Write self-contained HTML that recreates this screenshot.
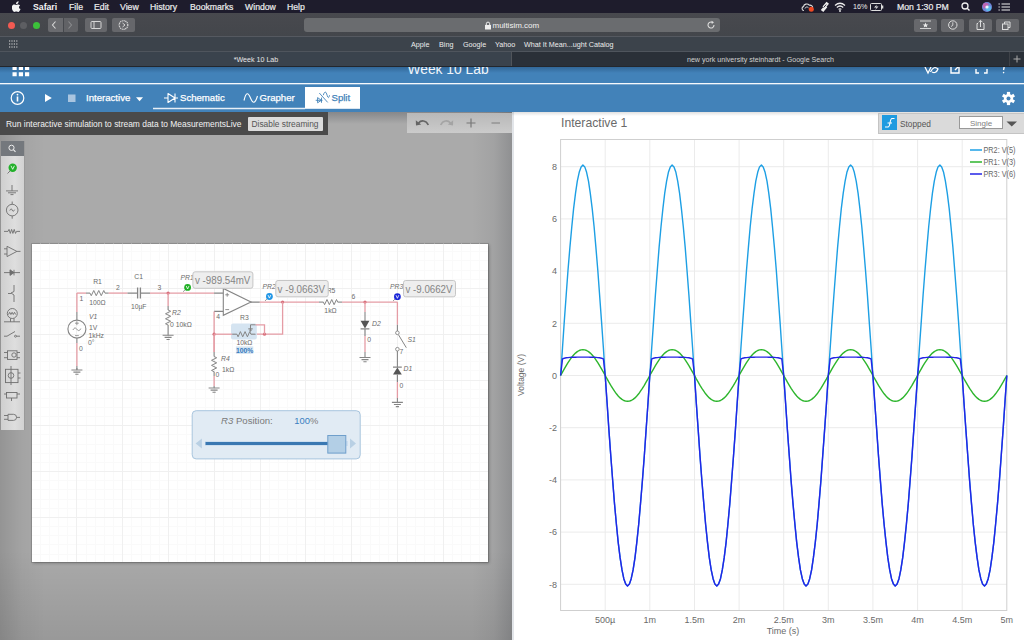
<!DOCTYPE html>
<html><head><meta charset="utf-8">
<style>
*{box-sizing:border-box;margin:0;padding:0}
html,body{width:1024px;height:640px;overflow:hidden;background:#a6a6a6;font-family:"Liberation Sans",sans-serif}
.a{position:absolute}
.t{position:absolute;white-space:nowrap;line-height:1}
svg text{font-family:"Liberation Sans",sans-serif}
</style></head><body>
<!-- menu bar -->
<div class="a" style="left:0;top:0;width:1024px;height:13px;background:#1e1c2c"></div>
<!-- toolbar -->
<div class="a" style="left:0;top:13px;width:1024px;height:24px;background:linear-gradient(#48494e,#43464b)"></div>
<div class="a" style="left:0;top:36px;width:1024px;height:1px;background:#555960"></div>
<!-- bookmarks bar -->
<div class="a" style="left:0;top:37px;width:1024px;height:14px;background:#3c434b"></div>
<div class="a" style="left:0;top:51px;width:1024px;height:1px;background:#4f555d"></div>
<!-- tab bar -->
<div class="a" style="left:0;top:52px;width:512px;height:14px;background:#3a434d"></div>
<div class="a" style="left:512px;top:52px;width:512px;height:14px;background:#2a3038"></div>
<div class="a" style="left:511px;top:52px;width:1px;height:14px;background:#50545a"></div>
<div class="a" style="left:0;top:66px;width:1024px;height:1px;background:#23272d;z-index:2"></div>
<div class="a" style="left:1009px;top:52px;width:1px;height:14px;background:#3e4248"></div>
<!-- menu bar content -->
<svg class="a" style="left:12px;top:1px" width="10" height="11" viewBox="0 0 10 11"><path d="M6.6,0.3C6.7,1.1 6.3,1.9 5.8,2.4C5.3,2.9 4.6,3.2 4,3.1C3.9,2.4 4.3,1.6 4.8,1.1C5.3,0.6 6.1,0.3 6.6,0.3ZM8.6,8.1C8.3,8.8 8.1,9.1 7.7,9.7C7.2,10.4 6.6,11 5.9,11C5.2,11 5.1,10.6 4.2,10.6C3.3,10.6 3.1,11 2.4,11C1.8,11 1.2,10.4 0.8,9.8C-0.4,8 -0.5,5.9 0.2,4.8C0.7,4 1.5,3.5 2.3,3.5C3.1,3.5 3.6,3.9 4.3,3.9C4.9,3.9 5.3,3.5 6.2,3.5C6.9,3.5 7.6,3.9 8.1,4.5C6.4,5.5 6.7,7.9 8.6,8.1Z" fill="#f4f4f4"/></svg>
<div class="t" style="left:33px;top:2.9px;font-size:8.7px;font-weight:bold;color:#f4f4f4">Safari</div>
<div class="t" style="left:69px;top:2.9px;font-size:8.7px;color:#ececec;-webkit-text-stroke:0.2px #ececec">File</div>
<div class="t" style="left:94px;top:2.9px;font-size:8.7px;color:#ececec;-webkit-text-stroke:0.2px #ececec">Edit</div>
<div class="t" style="left:120px;top:2.9px;font-size:8.7px;color:#ececec;-webkit-text-stroke:0.2px #ececec">View</div>
<div class="t" style="left:150px;top:2.9px;font-size:8.7px;color:#ececec;-webkit-text-stroke:0.2px #ececec">History</div>
<div class="t" style="left:190px;top:2.9px;font-size:8.7px;color:#ececec;-webkit-text-stroke:0.2px #ececec">Bookmarks</div>
<div class="t" style="left:245px;top:2.9px;font-size:8.7px;color:#ececec;-webkit-text-stroke:0.2px #ececec">Window</div>
<div class="t" style="left:287px;top:2.9px;font-size:8.7px;color:#ececec;-webkit-text-stroke:0.2px #ececec">Help</div>
<!-- menu right -->
<svg class="a" style="left:800px;top:1px" width="224" height="12" viewBox="800 1 224 12">
 <path d="M804,10.5C801.5,10.5 801.5,7 803.5,6.6C803.8,4 807.5,3 809.2,5.2C811.5,4.8 813,6.5 812.6,8" stroke="#ddd" stroke-width="1.1" fill="none"/><path d="M805,8.5C805.5,6.8 807.5,6.5 808.5,7.8" stroke="#ddd" stroke-width="1" fill="none"/><circle cx="811.3" cy="9.3" r="2.5" fill="#f04a23"/>
 <path d="M822.5,6.5L826.5,1.8L829,3.8L825,8.5ZM820.8,10L824.8,5.3L827.3,7.3L823.3,12Z" fill="#eee"/><path d="M823.6,7.6L826.2,4.6" stroke="#1e1c2c" stroke-width="0.9"/>
 <path d="M835,5.5 Q840,1 845,5.5 M836.8,7.5 Q840,4.5 843.2,7.5 M838.6,9.4 Q840,8.2 841.4,9.4" stroke="#eee" stroke-width="1.2" fill="none"/><circle cx="840" cy="11" r="0.9" fill="#eee"/>
 <rect x="870.5" y="3.5" width="11" height="7" rx="1" fill="none" stroke="#ddd" stroke-width="1"/><rect x="882" y="5.5" width="1.3" height="3" fill="#ddd"/><path d="M877,4.5 L874,7.5 L876.5,7.5 L875,10 L878.5,6.5 L876,6.5Z" fill="#eee"/>
 <circle cx="965" cy="6" r="3" fill="none" stroke="#eee" stroke-width="1.3"/><path d="M967.2,8.2 L969.5,10.5" stroke="#eee" stroke-width="1.4"/>
 <circle cx="987" cy="7" r="5" fill="#6f86d8"/><circle cx="985.8" cy="5.8" r="3" fill="#d75aa8" opacity="0.75"/><circle cx="988.3" cy="8.2" r="2.8" fill="#56c8f0" opacity="0.8"/><circle cx="987" cy="7" r="1.6" fill="#fff" opacity="0.85"/>
 <path d="M1001.5,4H1010M1001.5,7H1010M1001.5,10H1010M998.5,4H999.8M998.5,7H999.8M998.5,10H999.8" stroke="#eee" stroke-width="1.1"/>
</svg>
<div class="t" style="left:853px;top:3px;font-size:7.2px;color:#ececec">16%</div>
<div class="t" style="left:897px;top:2.9px;font-size:8.7px;color:#ececec;-webkit-text-stroke:0.2px #ececec">Mon 1:30 PM</div>
<!-- traffic lights -->
<div class="a" style="left:8px;top:21.5px;width:7px;height:7px;border-radius:50%;background:#f25a52"></div>
<div class="a" style="left:20px;top:21.5px;width:7px;height:7px;border-radius:50%;background:#5d5e62"></div>
<div class="a" style="left:32.5px;top:21.5px;width:7px;height:7px;border-radius:50%;background:#3cc13a"></div>
<!-- nav buttons -->
<div class="a" style="left:48px;top:18px;width:14.5px;height:14px;border-radius:2px 0 0 2px;background:#6a6b6f"></div>
<div class="a" style="left:63.5px;top:18px;width:14.5px;height:14px;border-radius:0 2px 2px 0;background:#616266"></div>
<svg class="a" style="left:48px;top:18px" width="30" height="14" viewBox="0 0 30 14"><path d="M7.5,3.5 L4.5,7 L7.5,10.5" stroke="#d8d8d8" stroke-width="1.1" fill="none"/><path d="M20.5,3.5 L23.5,7 L20.5,10.5" stroke="#8a8b8e" stroke-width="1.1" fill="none"/></svg>
<div class="a" style="left:85px;top:18px;width:22px;height:14px;border-radius:2px;background:#66676b"></div>
<svg class="a" style="left:85px;top:18px" width="22" height="14" viewBox="0 0 22 14"><rect x="6" y="3.5" width="10" height="7" rx="1" fill="none" stroke="#d6d6d6" stroke-width="1"/><path d="M9,3.5V10.5" stroke="#d6d6d6" stroke-width="1"/></svg>
<div class="a" style="left:112px;top:18px;width:23px;height:14px;border-radius:2px;background:#66676b"></div>
<svg class="a" style="left:112px;top:18px" width="23" height="14" viewBox="0 0 23 14"><circle cx="11.5" cy="7" r="4.3" fill="none" stroke="#d6d6d6" stroke-width="1.2" stroke-dasharray="1.2 0.6"/><path d="M10.5,5 L13,7 L10.5,9" stroke="#d6d6d6" stroke-width="1" fill="none"/></svg>
<!-- url bar -->
<div class="a" style="left:304px;top:18px;width:416px;height:14px;border-radius:3px;background:#6a6c6f"></div>
<svg class="a" style="left:484px;top:20.5px" width="8" height="9" viewBox="0 0 8 9"><rect x="1" y="4" width="6" height="4.5" fill="#eee"/><path d="M2.3,4V2.8A1.7,1.7 0 0 1 5.7,2.8V4" stroke="#eee" stroke-width="1" fill="none"/></svg>
<div class="t" style="left:492.5px;top:21.6px;font-size:8px;color:#f2f2f2">multisim.com</div>
<svg class="a" style="left:706px;top:20px" width="10" height="10" viewBox="0 0 10 10"><path d="M8,5A3,3 0 1 1 6.5,2.4" stroke="#ddd" stroke-width="1.1" fill="none"/><path d="M5.5,0.8 L8,2.2 L5.8,3.9Z" fill="#ddd"/></svg>
<!-- right toolbar buttons -->
<div class="a" style="left:914px;top:18.5px;width:23px;height:13.5px;border-radius:2px;background:#67686c"></div>
<div class="a" style="left:941px;top:18.5px;width:23px;height:13.5px;border-radius:2px;background:#67686c"></div>
<div class="a" style="left:969px;top:18.5px;width:22.5px;height:13.5px;border-radius:2px;background:#67686c"></div>
<div class="a" style="left:996px;top:18.5px;width:22.5px;height:13.5px;border-radius:2px;background:#67686c"></div>
<svg class="a" style="left:914px;top:18px" width="105" height="14" viewBox="914 18 105 14">
 <path d="M920,21H931M920,28.5H931" stroke="#ddd" stroke-width="0.9"/><path d="M925.5,22.6 L926.3,24.5 L928.3,24.6 L926.7,25.8 L927.3,27.6 L925.5,26.6 L923.7,27.6 L924.3,25.8 L922.7,24.6 L924.7,24.5Z" fill="#eee"/>
 <circle cx="952.8" cy="25" r="4.2" fill="none" stroke="#ddd" stroke-width="1"/><path d="M952.8,22.3V25.3L951,26.6" stroke="#ddd" stroke-width="0.9" fill="none"/>
 <path d="M978,23.5H977V29.5H984V23.5H983M980.5,27V20.5M978.6,22.2L980.5,20.3L982.4,22.2" stroke="#ddd" stroke-width="1" fill="none"/>
 <rect x="1002.5" y="24" width="5.5" height="5.5" fill="none" stroke="#ddd" stroke-width="1"/><path d="M1004.5,24V22H1010V27.5H1008" stroke="#ddd" stroke-width="1" fill="none"/>
</svg>
<!-- bookmarks -->
<svg class="a" style="left:9px;top:40px" width="9" height="8" viewBox="0 0 9 8"><path d="M0,1H9M0,4H9M0,7H9" stroke="#ddd" stroke-width="1.2" stroke-dasharray="1.2 1.2"/></svg>
<div class="t" style="left:411px;top:40.6px;font-size:7.2px;color:#ececec">Apple</div>
<div class="t" style="left:439px;top:40.6px;font-size:7.2px;color:#ececec">Bing</div>
<div class="t" style="left:463px;top:40.6px;font-size:7.2px;color:#ececec">Google</div>
<div class="t" style="left:495px;top:40.6px;font-size:7.2px;color:#ececec">Yahoo</div>
<div class="t" style="left:524px;top:40.6px;font-size:7.2px;color:#ececec">What It Mean...ught Catalog</div>
<!-- tabs -->
<div class="t" style="left:0;width:512px;text-align:center;top:56.5px;font-size:7.1px;color:#e8e8e8">*Week 10 Lab</div>
<div class="t" style="left:512px;width:497px;text-align:center;top:56.5px;font-size:7.1px;color:#d0d0d0">new york university steinhardt - Google Search</div>
<svg class="a" style="left:1010px;top:52px" width="14" height="14" viewBox="0 0 14 14"><path d="M7,3.5V10.5M3.5,7H10.5" stroke="#aaa" stroke-width="1"/></svg>
<!-- blue header -->
<div class="a" style="left:0;top:66px;width:1024px;height:46px;background:#4282b9"></div>
<div class="a" style="left:0;top:67px;width:1024px;height:6px;background:linear-gradient(rgba(0,20,50,0.25),rgba(0,0,0,0))"></div>
<div class="a" style="left:0;top:83px;width:1024px;height:1px;background:#f6f9fc"></div><div class="a" style="left:0;top:84px;width:1024px;height:1px;background:rgba(255,255,255,0.3)"></div>
<!-- grid icon top-left (partially hidden) -->
<svg class="a" style="left:0;top:66px" width="40" height="12" viewBox="0 66 40 12"><path d="M12.5,66H16.7V70H12.5ZM18.8,66H23V70H18.8ZM25,66H29.2V70H25ZM12.5,72.2H16.7V76.3H12.5ZM18.8,72.2H23V76.3H18.8ZM25,72.2H29.2V76.3H25Z" fill="#fff"/></svg>
<div class="a" style="left:380px;top:66px;width:140px;height:17px;overflow:hidden"><div class="t" style="left:27.5px;top:-2.6px;font-size:13.8px;color:#f0f5fa">Week 10 Lab</div></div>
<!-- header right icons partially hidden -->
<svg class="a" style="left:920px;top:66px" width="100" height="12" viewBox="920 66 100 12">
 <path d="M925,67 L928,73 L931,67M930.5,72 Q934,65 938,69 Q936,74 932,72" stroke="#fff" stroke-width="1.3" fill="none"/>
 <path d="M951,67V73H959V67M955,70 L958,67" stroke="#fff" stroke-width="1.4" fill="none"/>
 <path d="M976,69V73H979M984,73H987V69" stroke="#fff" stroke-width="1.4" fill="none"/>
 <path d="M1003.5,70 L1004.2,67" stroke="#fff" stroke-width="1.3"/><circle cx="1003.6" cy="72.6" r="0.8" fill="#fff"/>
</svg>
<!-- second toolbar -->
<svg class="a" style="left:0;top:84px" width="370" height="28" viewBox="0 84 370 28">
 <circle cx="17.5" cy="98" r="6.3" fill="none" stroke="#fff" stroke-width="1.2"/><rect x="16.7" y="96.5" width="1.6" height="5" fill="#fff"/><circle cx="17.5" cy="94.6" r="0.9" fill="#fff"/>
 <path d="M45,94 L51.8,98 L45,102Z" fill="#fff"/>
 <rect x="68" y="94.5" width="7.5" height="7.5" fill="#a9c5e0"/>
 <path d="M136,97.3H143L139.5,101.3Z" fill="#fff"/>
 <path d="M164,98H168M168,93.5V102.5L175,98ZM175,93.5V102.5M175,98H178" stroke="#fff" stroke-width="1.1" fill="none" stroke-linejoin="round"/>
 <path d="M244,100.5 C246,92 248,92 250.5,98 C253,104 255,104 257.5,96" stroke="#fff" stroke-width="1.1" fill="none"/>
 <rect x="305" y="87" width="55" height="21.8" fill="#fff"/>
 <path d="M153,108.5H305" stroke="#e7eff7" stroke-width="1.6"/>
 <path d="M315.7,100.3H322.5M317.6,97.6V102.8L321.3,100.3ZM321.5,97.6V102.8M319.3,93L327.7,102.4M323.3,95.2C324,92.6 325,91.5 326,92.5C327,94 327.6,97.8 328.4,97.6C329,97.4 329.3,96 329.6,95.2" stroke="#4282b9" stroke-width="0.9" fill="none"/>
</svg>
<div class="t" style="left:86px;top:92.9px;font-size:9.6px;color:#fff;-webkit-text-stroke:0.25px #fff">Interactive</div>
<div class="t" style="left:180px;top:92.9px;font-size:9.6px;color:#fff;-webkit-text-stroke:0.25px #fff">Schematic</div>
<div class="t" style="left:259.5px;top:92.9px;font-size:9.6px;color:#fff;-webkit-text-stroke:0.25px #fff">Grapher</div>
<div class="t" style="left:331.5px;top:92.9px;font-size:9.6px;color:#4282b9;-webkit-text-stroke:0.25px #4282b9">Split</div>
<!-- gear -->
<svg class="a" style="left:1000px;top:90px" width="17" height="17" viewBox="-8.5 -8.5 17 17"><g fill="#fff"><circle r="4.6"/><g id="tooth"><rect x="-1.6" y="-6.6" width="3.2" height="3"/></g><rect x="-1.6" y="-6.6" width="3.2" height="3" transform="rotate(60)"/><rect x="-1.6" y="-6.6" width="3.2" height="3" transform="rotate(120)"/><rect x="-1.6" y="-6.6" width="3.2" height="3" transform="rotate(180)"/><rect x="-1.6" y="-6.6" width="3.2" height="3" transform="rotate(240)"/><rect x="-1.6" y="-6.6" width="3.2" height="3" transform="rotate(300)"/></g><circle r="2" fill="#4282b9"/></svg>
<!-- left workspace gray -->
<div class="a" style="left:0;top:112px;width:512px;height:528px;background:linear-gradient(90deg,rgba(0,0,0,0.13) 0,rgba(0,0,0,0.04) 22px,rgba(0,0,0,0) 45px),linear-gradient(270deg,rgba(10,15,25,0.17) 0,rgba(10,15,25,0.05) 18px,rgba(0,0,0,0) 40px),linear-gradient(0deg,rgba(0,0,0,0.1) 0,rgba(0,0,0,0) 90px),#aaaaaa"></div>
<div class="a" style="left:0;top:112px;width:512px;height:12px;background:linear-gradient(rgba(40,45,55,0.28),rgba(40,45,55,0))"></div>
<!-- dark info strip -->
<div class="a" style="left:0;top:112px;width:328px;height:23px;background:#4a4a4a"></div>
<div class="t" style="left:6px;top:119.6px;font-size:8.44px;color:#f2f2f2">Run interactive simulation to stream data to MeasurementsLive</div>
<div class="a" style="left:248px;top:117px;width:75px;height:13.5px;background:#dcdcdc;border-radius:1px"></div>
<div class="t" style="left:251.5px;top:119.9px;font-size:8.4px;color:#555">Disable streaming</div>
<!-- undo toolbar -->
<div class="a" style="left:406.5px;top:112.5px;width:105.5px;height:20.5px;background:linear-gradient(#b8b8b8,#cbcbcb)"></div>
<svg class="a" style="left:406px;top:112px" width="106" height="21" viewBox="406 112 106 21">
 <path d="M418.5,123 C421,120 426,119.8 428.3,125" stroke="#646464" stroke-width="1.6" fill="none"/><path d="M415.8,120.2 L416,125.6 L421.2,124.6Z" fill="#646464"/>
 <path d="M450.5,123 C448,120 443,119.8 440.7,125" stroke="#a4a4a4" stroke-width="1.6" fill="none"/><path d="M453.2,120.2 L453,125.6 L447.8,124.6Z" fill="#a4a4a4"/>
 <path d="M471,118.5V127.5M466.5,123H475.5" stroke="#777" stroke-width="1.2"/>
 <path d="M491.5,123H500" stroke="#888" stroke-width="1.2"/>
</svg>
<!-- palette -->
<div class="a" style="left:1px;top:141px;width:23px;height:289px;background:linear-gradient(90deg,#cfcfcf,#dedede 60%,#d2d2d2)"></div>
<div class="a" style="left:1px;top:141px;width:23px;height:14.5px;background:#74787d"></div>
<svg class="a" style="left:1px;top:141px" width="23" height="15" viewBox="0 0 23 15"><circle cx="10.5" cy="6.8" r="2.6" fill="none" stroke="#eee" stroke-width="1"/><path d="M12.4,8.7 L14.5,10.8" stroke="#eee" stroke-width="1.1"/></svg>
<!-- sheet shadow + sheet -->
<div class="a" style="left:32px;top:244px;width:456px;height:318px;background:#fff;box-shadow:0 0 0 1px rgba(0,0,0,0.12),1px 1px 3px rgba(0,0,0,0.3)"></div>
<svg class="a" style="left:0;top:155px" width="26" height="276" viewBox="0 155 26 276">
<g stroke="#6e6e6e" stroke-width="0.9" fill="none">
 <path d="M7.5,173.5L10,171"/>
 <path d="M12,185V190.9M6,190.9H18M8,192.8H16M10.5,194.6H13.5"/>
 <path d="M12.2,201.5V204.3M12.2,215.9V218.7"/><circle cx="12.2" cy="210.1" r="5.8"/><path d="M9.8,210.5C10.8,208.5 11.6,208.5 12.2,210.1C12.8,211.7 13.6,211.7 14.6,209.7"/>
 <path d="M4,231.4H8L9,229.4L10.3,233.4L11.6,229.4L12.9,233.4L14.2,229.4L15.5,233.4L16.5,231.4H20"/>
 <path d="M7,246.3V256.6L16.9,251.4ZM4,248.8H7M4,254H7M16.9,251.4H20.5"/>
 <path d="M4,272.6H20M14,269.8V275.4"/><path d="M10,269.8V275.4L14,272.6Z" fill="#6e6e6e"/>
 <path d="M14,285V291.5L11,293L14,295V302M8,293.5H11"/>
 <circle cx="12.3" cy="313.5" r="5"/><path d="M8.5,314.5L9.7,312.3L10.9,314.5L12.1,312.3L13.3,314.5L14.5,312.3L15.7,314.5M4,321.8H20M10.5,318.3V321.8M14,318.3V321.8"/>
 <path d="M4,336.2H7L15,331.5M16.5,336.2H20"/><circle cx="15.5" cy="336.2" r="1"/>
 <rect x="7.5" y="350.8" width="9.5" height="8.6"/><path d="M4,352.5H7.5M4,357.7H7.5M17,352.5H20M17,357.7H20"/><circle cx="14" cy="355" r="2.2"/>
 <rect x="5.5" y="369.3" width="12.5" height="13.3"/><circle cx="11" cy="375.5" r="2.8"/><path d="M11,366V385M18,373H20.5M18,378H20.5"/>
 <rect x="6.5" y="392.5" width="10.5" height="5.5"/><path d="M4,394H6.5M17,394H20M11.5,398V401"/>
 <path d="M4,415.5H8M4,419.3H8M8,414.3H13.5A3.05,3.05 0 0 1 13.5,420.4H8ZM16.6,417.4H20"/>
</g>
<circle cx="12.7" cy="167.7" r="4.2" fill="#22b02a"/><path d="M11,165.8L12.7,169.3L14.4,165.8" stroke="#fff" stroke-width="0.8" fill="none"/>
</svg>
<div class="a" style="left:24px;top:141px;width:1px;height:289px;background:#9a9a9a"></div>
<svg class="a" style="left:0;top:0" width="1024" height="640" viewBox="0 0 1024 640">
<defs><clipPath id="sc"><rect x="32" y="243.5" width="456" height="318.5"/></clipPath></defs>
<g clip-path="url(#sc)"><path d="M21.5,243.5V562M40.5,243.5V562M49.5,243.5V562M58.5,243.5V562M67.5,243.5V562M86.5,243.5V562M95.5,243.5V562M104.5,243.5V562M113.5,243.5V562M131.5,243.5V562M141.5,243.5V562M150.5,243.5V562M159.5,243.5V562M177.5,243.5V562M186.5,243.5V562M195.5,243.5V562M205.5,243.5V562M223.5,243.5V562M232.5,243.5V562M241.5,243.5V562M250.5,243.5V562M269.5,243.5V562M278.5,243.5V562M287.5,243.5V562M296.5,243.5V562M315.5,243.5V562M324.5,243.5V562M333.5,243.5V562M342.5,243.5V562M360.5,243.5V562M370.5,243.5V562M379.5,243.5V562M388.5,243.5V562M406.5,243.5V562M415.5,243.5V562M424.5,243.5V562M434.5,243.5V562M452.5,243.5V562M461.5,243.5V562M470.5,243.5V562M479.5,243.5V562M32,233.5H488M32,251.5H488M32,260.5H488M32,270.5H488M32,279.5H488M32,297.5H488M32,306.5H488M32,315.5H488M32,325.5H488M32,343.5H488M32,352.5H488M32,361.5H488M32,370.5H488M32,389.5H488M32,398.5H488M32,407.5H488M32,416.5H488M32,434.5H488M32,444.5H488M32,453.5H488M32,462.5H488M32,480.5H488M32,489.5H488M32,499.5H488M32,508.5H488M32,526.5H488M32,535.5H488M32,544.5H488M32,554.5H488" stroke="#fafafa" stroke-width="1" fill="none"/><path d="M31.5,243.5V562M76.5,243.5V562M122.5,243.5V562M168.5,243.5V562M214.5,243.5V562M260.5,243.5V562M305.5,243.5V562M351.5,243.5V562M397.5,243.5V562M443.5,243.5V562M32,242.5H488M32,288.5H488M32,334.5H488M32,380.5H488M32,425.5H488M32,471.5H488M32,517.5H488" stroke="#f0f0f0" stroke-width="1" fill="none"/></g>
<path d="M76.9,293.1V312" stroke="#e59ca5" stroke-width="1.3" fill="none"/>
<path d="M76.9,312V320" stroke="#858585" stroke-width="1.1" fill="none"/>
<circle cx="76.9" cy="329.1" r="9" fill="none" stroke="#858585" stroke-width="1.1"/>
<path d="M75,323.2H78.8M76.9,321.3V325.1M75,335.6H78.8" stroke="#858585" stroke-width="0.8" fill="none"/>
<path d="M73,330 C74.2,327.5 75.6,327.5 76.9,329.3 C78.2,331.1 79.6,331.1 80.8,328.6" stroke="#858585" stroke-width="0.9" fill="none"/>
<path d="M76.9,338.2V343" stroke="#858585" stroke-width="1.1" fill="none"/>
<path d="M76.9,343V366" stroke="#e59ca5" stroke-width="1.3" fill="none"/>
<path d="M76.9,366V370" stroke="#858585" stroke-width="1.1" fill="none"/>
<path d="M76.9,368V370" stroke="#858585" stroke-width="1.1" fill="none"/>
<path d="M71.4,370H82.4M73.4,372.1H80.4M75.30000000000001,374.2H78.5" stroke="#858585" stroke-width="1.1" fill="none"/>
<text x="79.5" y="301.3" font-size="6.8" fill="#6c6c6c" text-anchor="start">1</text>
<text x="79" y="351.3" font-size="6.8" fill="#6c6c6c" text-anchor="start">0</text>
<text x="89" y="318.5" font-size="6.8" fill="#6c6c6c" text-anchor="start" font-style="italic">V1</text>
<text x="89" y="330" font-size="6.8" fill="#6c6c6c" text-anchor="start">1V</text>
<text x="88.5" y="337.6" font-size="6.8" fill="#6c6c6c" text-anchor="start">1kHz</text>
<text x="88" y="345" font-size="6.8" fill="#6c6c6c" text-anchor="start">0°</text>
<path d="M76.9,293.1H86" stroke="#e59ca5" stroke-width="1.3" fill="none"/>
<path d="M86,293.1H90" stroke="#858585" stroke-width="1.1" fill="none"/>
<path d="M90,293.1L91.25,295.70L93.75,290.50L96.25,295.70L98.75,290.50L101.25,295.70L103.75,290.50L105,293.1" stroke="#858585" stroke-width="1.0" fill="none"/>
<path d="M105,293.1H108.7" stroke="#858585" stroke-width="1.1" fill="none"/>
<path d="M108.7,293.1H127.5" stroke="#e59ca5" stroke-width="1.3" fill="none"/>
<text x="97.5" y="284" font-size="6.8" fill="#6c6c6c" text-anchor="middle">R1</text>
<text x="97.5" y="304.5" font-size="6.8" fill="#6c6c6c" text-anchor="middle">100Ω</text>
<text x="118" y="290" font-size="6.8" fill="#6c6c6c" text-anchor="middle">2</text>
<path d="M127.5,293.1H137.5M140.5,293.1H150" stroke="#858585" stroke-width="1.1" fill="none"/>
<path d="M137.6,287.6V298.6M140.4,287.6V298.6" stroke="#858585" stroke-width="1.3" fill="none"/>
<text x="138.7" y="279.2" font-size="6.8" fill="#6c6c6c" text-anchor="middle">C1</text>
<text x="138.7" y="309" font-size="6.8" fill="#6c6c6c" text-anchor="middle">10µF</text>
<text x="159.3" y="290" font-size="6.8" fill="#6c6c6c" text-anchor="middle">3</text>
<path d="M150,293.1H214.1" stroke="#e59ca5" stroke-width="1.3" fill="none"/>
<circle cx="168.1" cy="293.1" r="1.6" fill="#d9707c"/>
<path d="M168.1,293.1V306" stroke="#e59ca5" stroke-width="1.3" fill="none"/>
<path d="M168.1,306V310" stroke="#858585" stroke-width="1.1" fill="none"/>
<path d="M168.1,310L170.70,311.25L165.50,313.75L170.70,316.25L165.50,318.75L170.70,321.25L165.50,323.75L168.1,325" stroke="#858585" stroke-width="1.0" fill="none"/>
<path d="M168.1,325V335.3" stroke="#858585" stroke-width="1.1" fill="none"/>
<path d="M162.6,335.3H173.6M164.6,337.40000000000003H171.6M166.5,339.5H169.7" stroke="#858585" stroke-width="1.1" fill="none"/>
<text x="172" y="315" font-size="6.8" fill="#6c6c6c" text-anchor="start" font-style="italic">R2</text>
<text x="170" y="326.5" font-size="6.8" fill="#6c6c6c" text-anchor="start">0 10kΩ</text>
<path d="M214.1,293.1H223.3M214.1,311.4H223.3M250,302.1H259.8" stroke="#858585" stroke-width="1.1" fill="none"/>
<path d="M223.3,288.4V315.3L251,302.1Z" fill="#fff" stroke="#858585" stroke-width="1.1"/>
<path d="M225.3,294.8H229.1M227.2,292.9V296.7M225.3,309.6H229.1" stroke="#858585" stroke-width="0.9" fill="none"/>
<path d="M214.1,311.4V352" stroke="#e59ca5" stroke-width="1.3" fill="none"/>
<circle cx="214.1" cy="334.2" r="1.6" fill="#d9707c"/>
<text x="218.1" y="319.3" font-size="6.8" fill="#6c6c6c" text-anchor="middle">4</text>
<path d="M259.8,302.1H319" stroke="#e59ca5" stroke-width="1.3" fill="none"/>
<circle cx="282.6" cy="302.1" r="1.6" fill="#d9707c"/>
<path d="M282.6,302.1V334.2H255.6" stroke="#e59ca5" stroke-width="1.3" fill="none"/>
<circle cx="264.5" cy="334.2" r="1.6" fill="#d9707c"/>
<rect x="231" y="323.4" width="25.8" height="16" rx="2" fill="#d5e4f1"/>
<path d="M214.1,334.2H232.2" stroke="#e59ca5" stroke-width="1.3" fill="none"/>
<path d="M232.2,334.2H236.9" stroke="#858585" stroke-width="1.1" fill="none"/>
<path d="M236.9,334.2L238.07,336.80L240.40,331.60L242.73,336.80L245.07,331.60L247.40,336.80L249.73,331.60L250.9,334.2" stroke="#858585" stroke-width="1.0" fill="none"/>
<path d="M250.9,334.2H255.6" stroke="#858585" stroke-width="1.1" fill="none"/>
<path d="M250.5,331V324.8H255.6" stroke="#858585" stroke-width="1.0" fill="none"/>
<path d="M255.6,324.8H264.5V334.2" stroke="#e59ca5" stroke-width="1.3" fill="none"/>
<path d="M248.6,328.6H252.4L250.5,331.6Z" fill="none" stroke="#858585" stroke-width="0.8"/>
<text x="244.4" y="320" font-size="6.8" fill="#6c6c6c" text-anchor="middle">R3</text>
<text x="244.4" y="345" font-size="6.8" fill="#6c6c6c" text-anchor="middle">10kΩ</text>
<rect x="235.9" y="346.4" width="17.4" height="7.5" fill="#d5e4f1"/>
<text x="244.6" y="352.6" font-size="6.8" fill="#3479bd" text-anchor="middle" font-weight="bold">100%</text>
<path d="M214.1,352V356.5" stroke="#858585" stroke-width="1.1" fill="none"/>
<path d="M214.1,356.5L216.70,357.77L211.50,360.30L216.70,362.83L211.50,365.37L216.70,367.90L211.50,370.43L214.1,371.7" stroke="#858585" stroke-width="1.0" fill="none"/>
<path d="M214.1,371.7V376" stroke="#858585" stroke-width="1.1" fill="none"/>
<path d="M214.1,334.2V352" stroke="#e59ca5" stroke-width="1.3" fill="none"/>
<path d="M214.1,376V386" stroke="#e59ca5" stroke-width="1.3"/>
<path d="M214.1,386V388" stroke="#858585" stroke-width="1.1" fill="none"/>
<path d="M208.6,388H219.6M210.6,390.1H217.6M212.5,392.2H215.7" stroke="#858585" stroke-width="1.1" fill="none"/>
<text x="221" y="360.5" font-size="6.8" fill="#6c6c6c" text-anchor="start" font-style="italic">R4</text>
<text x="222" y="372" font-size="6.8" fill="#6c6c6c" text-anchor="start">1kΩ</text>
<text x="215.5" y="377" font-size="6.8" fill="#6c6c6c" text-anchor="start">0</text>
<path d="M319,302.1H323.4" stroke="#858585" stroke-width="1.1" fill="none"/>
<path d="M323.4,302.1L324.59,304.70L326.97,299.50L329.36,304.70L331.74,299.50L334.12,304.70L336.51,299.50L337.7,302.1" stroke="#858585" stroke-width="1.0" fill="none"/>
<path d="M337.7,302.1H342" stroke="#858585" stroke-width="1.1" fill="none"/>
<path d="M342,302.1H397.4" stroke="#e59ca5" stroke-width="1.3" fill="none"/>
<text x="331" y="292.5" font-size="6.8" fill="#6c6c6c" text-anchor="middle">R5</text>
<text x="330.5" y="313" font-size="6.8" fill="#6c6c6c" text-anchor="middle">1kΩ</text>
<text x="353.5" y="299.3" font-size="6.8" fill="#6c6c6c" text-anchor="middle">6</text>
<circle cx="365" cy="302.1" r="1.6" fill="#d9707c"/>
<path d="M365,302.1V312" stroke="#e59ca5" stroke-width="1.3" fill="none"/>
<path d="M365,312V321" stroke="#858585" stroke-width="1.1" fill="none"/>
<path d="M360.6,320.8H369.4L365,328.6Z" fill="#555"/>
<path d="M360.6,328.8H369.4M365,328.6V336" stroke="#858585" stroke-width="1.2" fill="none"/>
<path d="M365,336V352" stroke="#e59ca5" stroke-width="1.3" fill="none"/>
<path d="M365,352V357.5" stroke="#858585" stroke-width="1.1" fill="none"/>
<path d="M359.5,357.5H370.5M361.5,359.6H368.5M363.4,361.7H366.6" stroke="#858585" stroke-width="1.1" fill="none"/>
<text x="372" y="325.5" font-size="6.8" fill="#6c6c6c" text-anchor="start" font-style="italic">D2</text>
<text x="367.3" y="342" font-size="6.8" fill="#6c6c6c" text-anchor="start">0</text>
<path d="M397.4,302.1V324.7" stroke="#e59ca5" stroke-width="1.3" fill="none"/>
<path d="M397.4,324.7V331" stroke="#858585" stroke-width="1.1" fill="none"/>
<circle cx="397.4" cy="332.8" r="1.8" fill="#fff" stroke="#858585" stroke-width="0.9"/>
<path d="M398.5,334.8L406.3,347.7" stroke="#858585" stroke-width="1.0" fill="none"/>
<circle cx="397.4" cy="349.2" r="1.8" fill="#fff" stroke="#858585" stroke-width="0.9"/>
<text x="407.5" y="341.5" font-size="6.8" fill="#6c6c6c" text-anchor="start" font-style="italic">S1</text>
<text x="399.5" y="353.5" font-size="6.8" fill="#6c6c6c" text-anchor="start">7</text>
<path d="M397.4,351V367.4" stroke="#858585" stroke-width="1.1" fill="none"/>
<path d="M393,374.6H401.8L397.4,367.4Z" fill="#555"/>
<path d="M393,367.2H401.8M397.4,374.6V382" stroke="#858585" stroke-width="1.2" fill="none"/>
<path d="M397.4,382V398" stroke="#e59ca5" stroke-width="1.3" fill="none"/>
<path d="M397.4,398V402.4" stroke="#858585" stroke-width="1.1" fill="none"/>
<path d="M391.9,402.4H402.9M393.9,404.5H400.9M395.79999999999995,406.59999999999997H399.0" stroke="#858585" stroke-width="1.1" fill="none"/>
<text x="403.5" y="371" font-size="6.8" fill="#6c6c6c" text-anchor="start" font-style="italic">D1</text>
<text x="399.5" y="388" font-size="6.8" fill="#6c6c6c" text-anchor="start">0</text>
<path d="M183,291.8L185.6,289.4" stroke="#858585" stroke-width="0.8" fill="none"/>
<circle cx="187.6" cy="287.4" r="3.4" fill="#1fb024"/>
<path d="M186.2,285.9L187.6,289.0L189.0,285.9" stroke="#fff" stroke-width="0.8" fill="none"/>
<text x="180.5" y="279.5" font-size="6.8" fill="#6c6c6c" text-anchor="start" font-style="italic">PR1</text>
<path d="M265,301L267.4,298.5" stroke="#858585" stroke-width="0.8" fill="none"/>
<circle cx="269.4" cy="296.5" r="3.4" fill="#2196e6"/>
<path d="M268.0,295.0L269.4,298.1L270.79999999999995,295.0" stroke="#fff" stroke-width="0.8" fill="none"/>
<text x="262.5" y="288.5" font-size="6.8" fill="#6c6c6c" text-anchor="start" font-style="italic">PR2</text>
<path d="M393,301L395.4,298.7" stroke="#858585" stroke-width="0.8" fill="none"/>
<circle cx="397.4" cy="296.7" r="3.4" fill="#1a26d8"/>
<path d="M396.0,295.2L397.4,298.3L398.79999999999995,295.2" stroke="#fff" stroke-width="0.8" fill="none"/>
<text x="390" y="288.5" font-size="6.8" fill="#6c6c6c" text-anchor="start" font-style="italic">PR3</text>
<rect x="192.9" y="271.8" width="60.0" height="16.5" rx="2.2" fill="#eeeeee" stroke="#c6c6c6" stroke-width="1"/>
<text x="195" y="283.9" font-size="10.3" fill="#858585" textLength="55.4" lengthAdjust="spacingAndGlyphs">v -989.54mV</text>
<rect x="275.8" y="280.5" width="52.39999999999998" height="16.30000000000001" rx="2.2" fill="#eeeeee" stroke="#c6c6c6" stroke-width="1"/>
<text x="277.5" y="292.6" font-size="10.3" fill="#858585" textLength="47.5" lengthAdjust="spacingAndGlyphs">v -9.0663V</text>
<rect x="403.5" y="280.5" width="52.0" height="16.30000000000001" rx="2.2" fill="#eeeeee" stroke="#c6c6c6" stroke-width="1"/>
<text x="405.5" y="292.6" font-size="10.3" fill="#858585" textLength="47" lengthAdjust="spacingAndGlyphs">v -9.0662V</text>
<rect x="192.2" y="410.7" width="168" height="48.2" rx="4" fill="#e1ebf4" stroke="#a8c5de" stroke-width="1"/>
<text x="221" y="423.6" font-size="9.6" fill="#7a7a7a"><tspan font-style="italic">R3</tspan> Position:</text>
<text x="294.3" y="423.6" font-size="9.4" fill="#3a7ec0">100<tspan fill="#7a7a7a">%</tspan></text>
<path d="M201.9,438.5V448.5L195.6,443.5Z" fill="#b9d0e4"/><path d="M350,438.5V448.5L356,443.5Z" fill="#b9d0e4"/>
<rect x="205" y="441" width="143" height="5" fill="#cddff0"/>
<rect x="205.5" y="442" width="123" height="3" fill="#3a78b2"/>
<rect x="327.8" y="435.5" width="18" height="17.6" fill="#b3cfe6" stroke="#6f9fcb" stroke-width="1"/>
</svg>
<div class="a" style="left:512px;top:112px;width:512px;height:528px;background:#fff"></div>
<div class="a" style="left:512px;top:112px;width:2px;height:528px;background:#e2e5e9"></div>
<div class="a" style="left:512px;top:112px;width:512px;height:4px;background:linear-gradient(rgba(0,0,0,0.12),rgba(0,0,0,0))"></div>
<div class="t" style="left:561px;top:117.3px;font-size:12.2px;color:#6a6a6a">Interactive 1</div>
<!-- stopped panel -->
<div class="a" style="left:878px;top:112.5px;width:146px;height:21px;background:#dadada;border:1px solid #c4c4c4;border-right:none"></div>
<div class="a" style="left:882px;top:115.3px;width:15px;height:15px;background:#1e9be0"></div>
<svg class="a" style="left:882px;top:115px" width="15" height="15" viewBox="0 0 15 15"><path d="M3,12 H6 C7,12 7.5,11 8,8 C8.5,5 9,3.5 10,3.5 H12.5 M5.5,8H10" stroke="#fff" stroke-width="1.1" fill="none"/></svg>
<div class="t" style="left:900px;top:119.8px;font-size:8.3px;color:#555">Stopped</div>
<div class="a" style="left:959px;top:115.8px;width:44px;height:13px;background:#fff;border:1px solid #999"></div>
<div class="t" style="left:959px;width:44px;text-align:center;top:119.6px;font-size:8px;color:#808080">Single</div>
<svg class="a" style="left:1004.5px;top:119.5px" width="14" height="8" viewBox="0 0 14 8"><path d="M1.5,1.5H12L6.75,6.5Z" fill="#555"/></svg>
<svg style="position:absolute;left:0;top:0" width="1024" height="640" viewBox="0 0 1024 640">
<path d="M605.2,139.5V610.5M649.8,139.5V610.5M694.5,139.5V610.5M739.1,139.5V610.5M783.7,139.5V610.5M828.3,139.5V610.5M872.9,139.5V610.5M917.6,139.5V610.5M962.2,139.5V610.5M560.6,584.3H1006.8M560.6,532.1H1006.8M560.6,479.9H1006.8M560.6,427.7H1006.8M560.6,375.5H1006.8M560.6,323.3H1006.8M560.6,271.1H1006.8M560.6,218.9H1006.8M560.6,166.7H1006.8" stroke="#ebebeb" stroke-width="1" fill="none"/>
<rect x="560.6" y="139.5" width="446.2" height="471.0" fill="none" stroke="#cfcfcf" stroke-width="1"/>
<path d="M560.6,375.5 L562.5,348.0 L564.3,321.1 L566.2,295.0 L568.0,270.3 L569.9,247.4 L571.8,226.7 L573.6,208.6 L575.5,193.3 L577.3,181.1 L579.2,172.3 L581.1,166.9 L582.9,165.1 L584.8,166.9 L586.6,172.3 L588.5,181.1 L590.3,193.3 L592.2,208.6 L594.1,226.7 L595.9,247.4 L597.8,270.3 L599.6,295.0 L601.5,321.1 L603.4,348.0 L605.2,375.5 L607.1,403.0 L608.9,429.9 L610.8,456.0 L612.7,480.7 L614.5,503.6 L616.4,524.3 L618.2,542.4 L620.1,557.7 L622.0,569.9 L623.8,578.7 L625.7,584.1 L627.5,585.9 L629.4,584.1 L631.2,578.7 L633.1,569.9 L635.0,557.7 L636.8,542.4 L638.7,524.3 L640.5,503.6 L642.4,480.7 L644.3,456.0 L646.1,429.9 L648.0,403.0 L649.8,375.5 L651.7,348.0 L653.6,321.1 L655.4,295.0 L657.3,270.3 L659.1,247.4 L661.0,226.7 L662.9,208.6 L664.7,193.3 L666.6,181.1 L668.4,172.3 L670.3,166.9 L672.1,165.1 L674.0,166.9 L675.9,172.3 L677.7,181.1 L679.6,193.3 L681.4,208.6 L683.3,226.7 L685.2,247.4 L687.0,270.3 L688.9,295.0 L690.7,321.1 L692.6,348.0 L694.5,375.5 L696.3,403.0 L698.2,429.9 L700.0,456.0 L701.9,480.7 L703.8,503.6 L705.6,524.3 L707.5,542.4 L709.3,557.7 L711.2,569.9 L713.1,578.7 L714.9,584.1 L716.8,585.9 L718.6,584.1 L720.5,578.7 L722.3,569.9 L724.2,557.7 L726.1,542.4 L727.9,524.3 L729.8,503.6 L731.6,480.7 L733.5,456.0 L735.4,429.9 L737.2,403.0 L739.1,375.5 L740.9,348.0 L742.8,321.1 L744.7,295.0 L746.5,270.3 L748.4,247.4 L750.2,226.7 L752.1,208.6 L754.0,193.3 L755.8,181.1 L757.7,172.3 L759.5,166.9 L761.4,165.1 L763.2,166.9 L765.1,172.3 L767.0,181.1 L768.8,193.3 L770.7,208.6 L772.5,226.7 L774.4,247.4 L776.3,270.3 L778.1,295.0 L780.0,321.1 L781.8,348.0 L783.7,375.5 L785.6,403.0 L787.4,429.9 L789.3,456.0 L791.1,480.7 L793.0,503.6 L794.9,524.3 L796.7,542.4 L798.6,557.7 L800.4,569.9 L802.3,578.7 L804.2,584.1 L806.0,585.9 L807.9,584.1 L809.7,578.7 L811.6,569.9 L813.4,557.7 L815.3,542.4 L817.2,524.3 L819.0,503.6 L820.9,480.7 L822.7,456.0 L824.6,429.9 L826.5,403.0 L828.3,375.5 L830.2,348.0 L832.0,321.1 L833.9,295.0 L835.8,270.3 L837.6,247.4 L839.5,226.7 L841.3,208.6 L843.2,193.3 L845.1,181.1 L846.9,172.3 L848.8,166.9 L850.6,165.1 L852.5,166.9 L854.3,172.3 L856.2,181.1 L858.1,193.3 L859.9,208.6 L861.8,226.7 L863.6,247.4 L865.5,270.3 L867.4,295.0 L869.2,321.1 L871.1,348.0 L872.9,375.5 L874.8,403.0 L876.7,429.9 L878.5,456.0 L880.4,480.7 L882.2,503.6 L884.1,524.3 L886.0,542.4 L887.8,557.7 L889.7,569.9 L891.5,578.7 L893.4,584.1 L895.2,585.9 L897.1,584.1 L899.0,578.7 L900.8,569.9 L902.7,557.7 L904.5,542.4 L906.4,524.3 L908.3,503.6 L910.1,480.7 L912.0,456.0 L913.8,429.9 L915.7,403.0 L917.6,375.5 L919.4,348.0 L921.3,321.1 L923.1,295.0 L925.0,270.3 L926.9,247.4 L928.7,226.7 L930.6,208.6 L932.4,193.3 L934.3,181.1 L936.2,172.3 L938.0,166.9 L939.9,165.1 L941.7,166.9 L943.6,172.3 L945.4,181.1 L947.3,193.3 L949.2,208.6 L951.0,226.7 L952.9,247.4 L954.7,270.3 L956.6,295.0 L958.5,321.1 L960.3,348.0 L962.2,375.5 L964.0,403.0 L965.9,429.9 L967.8,456.0 L969.6,480.7 L971.5,503.6 L973.3,524.3 L975.2,542.4 L977.1,557.7 L978.9,569.9 L980.8,578.7 L982.6,584.1 L984.5,585.9 L986.3,584.1 L988.2,578.7 L990.1,569.9 L991.9,557.7 L993.8,542.4 L995.6,524.3 L997.5,503.6 L999.4,480.7 L1001.2,456.0 L1003.1,429.9 L1004.9,403.0 L1006.8,375.5" stroke="#1d9fe4" stroke-width="1.4" fill="none" stroke-linejoin="round"/>
<path d="M560.6,375.5 L562.5,372.1 L564.3,368.8 L566.2,365.6 L568.0,362.6 L569.9,359.8 L571.8,357.2 L573.6,355.0 L575.5,353.1 L577.3,351.6 L579.2,350.5 L581.1,349.9 L582.9,349.7 L584.8,349.9 L586.6,350.5 L588.5,351.6 L590.3,353.1 L592.2,355.0 L594.1,357.2 L595.9,359.8 L597.8,362.6 L599.6,365.6 L601.5,368.8 L603.4,372.1 L605.2,375.5 L607.1,378.9 L608.9,382.2 L610.8,385.4 L612.7,388.4 L614.5,391.2 L616.4,393.8 L618.2,396.0 L620.1,397.9 L622.0,399.4 L623.8,400.5 L625.7,401.1 L627.5,401.3 L629.4,401.1 L631.2,400.5 L633.1,399.4 L635.0,397.9 L636.8,396.0 L638.7,393.8 L640.5,391.2 L642.4,388.4 L644.3,385.4 L646.1,382.2 L648.0,378.9 L649.8,375.5 L651.7,372.1 L653.6,368.8 L655.4,365.6 L657.3,362.6 L659.1,359.8 L661.0,357.2 L662.9,355.0 L664.7,353.1 L666.6,351.6 L668.4,350.5 L670.3,349.9 L672.1,349.7 L674.0,349.9 L675.9,350.5 L677.7,351.6 L679.6,353.1 L681.4,355.0 L683.3,357.2 L685.2,359.8 L687.0,362.6 L688.9,365.6 L690.7,368.8 L692.6,372.1 L694.5,375.5 L696.3,378.9 L698.2,382.2 L700.0,385.4 L701.9,388.4 L703.8,391.2 L705.6,393.8 L707.5,396.0 L709.3,397.9 L711.2,399.4 L713.1,400.5 L714.9,401.1 L716.8,401.3 L718.6,401.1 L720.5,400.5 L722.3,399.4 L724.2,397.9 L726.1,396.0 L727.9,393.8 L729.8,391.2 L731.6,388.4 L733.5,385.4 L735.4,382.2 L737.2,378.9 L739.1,375.5 L740.9,372.1 L742.8,368.8 L744.7,365.6 L746.5,362.6 L748.4,359.8 L750.2,357.2 L752.1,355.0 L754.0,353.1 L755.8,351.6 L757.7,350.5 L759.5,349.9 L761.4,349.7 L763.2,349.9 L765.1,350.5 L767.0,351.6 L768.8,353.1 L770.7,355.0 L772.5,357.2 L774.4,359.8 L776.3,362.6 L778.1,365.6 L780.0,368.8 L781.8,372.1 L783.7,375.5 L785.6,378.9 L787.4,382.2 L789.3,385.4 L791.1,388.4 L793.0,391.2 L794.9,393.8 L796.7,396.0 L798.6,397.9 L800.4,399.4 L802.3,400.5 L804.2,401.1 L806.0,401.3 L807.9,401.1 L809.7,400.5 L811.6,399.4 L813.4,397.9 L815.3,396.0 L817.2,393.8 L819.0,391.2 L820.9,388.4 L822.7,385.4 L824.6,382.2 L826.5,378.9 L828.3,375.5 L830.2,372.1 L832.0,368.8 L833.9,365.6 L835.8,362.6 L837.6,359.8 L839.5,357.2 L841.3,355.0 L843.2,353.1 L845.1,351.6 L846.9,350.5 L848.8,349.9 L850.6,349.7 L852.5,349.9 L854.3,350.5 L856.2,351.6 L858.1,353.1 L859.9,355.0 L861.8,357.2 L863.6,359.8 L865.5,362.6 L867.4,365.6 L869.2,368.8 L871.1,372.1 L872.9,375.5 L874.8,378.9 L876.7,382.2 L878.5,385.4 L880.4,388.4 L882.2,391.2 L884.1,393.8 L886.0,396.0 L887.8,397.9 L889.7,399.4 L891.5,400.5 L893.4,401.1 L895.2,401.3 L897.1,401.1 L899.0,400.5 L900.8,399.4 L902.7,397.9 L904.5,396.0 L906.4,393.8 L908.3,391.2 L910.1,388.4 L912.0,385.4 L913.8,382.2 L915.7,378.9 L917.6,375.5 L919.4,372.1 L921.3,368.8 L923.1,365.6 L925.0,362.6 L926.9,359.8 L928.7,357.2 L930.6,355.0 L932.4,353.1 L934.3,351.6 L936.2,350.5 L938.0,349.9 L939.9,349.7 L941.7,349.9 L943.6,350.5 L945.4,351.6 L947.3,353.1 L949.2,355.0 L951.0,357.2 L952.9,359.8 L954.7,362.6 L956.6,365.6 L958.5,368.8 L960.3,372.1 L962.2,375.5 L964.0,378.9 L965.9,382.2 L967.8,385.4 L969.6,388.4 L971.5,391.2 L973.3,393.8 L975.2,396.0 L977.1,397.9 L978.9,399.4 L980.8,400.5 L982.6,401.1 L984.5,401.3 L986.3,401.1 L988.2,400.5 L990.1,399.4 L991.9,397.9 L993.8,396.0 L995.6,393.8 L997.5,391.2 L999.4,388.4 L1001.2,385.4 L1003.1,382.2 L1004.9,378.9 L1006.8,375.5" stroke="#2db52d" stroke-width="1.4" fill="none" stroke-linejoin="round"/>
<path d="M560.6,375.5 L562.5,359.0 L564.3,358.2 L566.2,357.8 L568.0,357.6 L569.9,357.4 L571.8,357.3 L573.6,357.2 L575.5,357.2 L577.3,357.1 L579.2,357.1 L581.1,357.1 L582.9,357.1 L584.8,357.1 L586.6,357.1 L588.5,357.1 L590.3,357.2 L592.2,357.2 L594.1,357.3 L595.9,357.4 L597.8,357.6 L599.6,357.8 L601.5,358.2 L603.4,359.0 L605.2,375.5 L607.1,403.0 L608.9,429.9 L610.8,456.0 L612.7,480.7 L614.5,503.6 L616.4,524.3 L618.2,542.4 L620.1,557.7 L622.0,569.9 L623.8,578.7 L625.7,584.1 L627.5,585.9 L629.4,584.1 L631.2,578.7 L633.1,569.9 L635.0,557.7 L636.8,542.4 L638.7,524.3 L640.5,503.6 L642.4,480.7 L644.3,456.0 L646.1,429.9 L648.0,403.0 L649.8,375.5 L651.7,359.0 L653.6,358.2 L655.4,357.8 L657.3,357.6 L659.1,357.4 L661.0,357.3 L662.9,357.2 L664.7,357.2 L666.6,357.1 L668.4,357.1 L670.3,357.1 L672.1,357.1 L674.0,357.1 L675.9,357.1 L677.7,357.1 L679.6,357.2 L681.4,357.2 L683.3,357.3 L685.2,357.4 L687.0,357.6 L688.9,357.8 L690.7,358.2 L692.6,359.0 L694.5,375.5 L696.3,403.0 L698.2,429.9 L700.0,456.0 L701.9,480.7 L703.8,503.6 L705.6,524.3 L707.5,542.4 L709.3,557.7 L711.2,569.9 L713.1,578.7 L714.9,584.1 L716.8,585.9 L718.6,584.1 L720.5,578.7 L722.3,569.9 L724.2,557.7 L726.1,542.4 L727.9,524.3 L729.8,503.6 L731.6,480.7 L733.5,456.0 L735.4,429.9 L737.2,403.0 L739.1,375.5 L740.9,359.0 L742.8,358.2 L744.7,357.8 L746.5,357.6 L748.4,357.4 L750.2,357.3 L752.1,357.2 L754.0,357.2 L755.8,357.1 L757.7,357.1 L759.5,357.1 L761.4,357.1 L763.2,357.1 L765.1,357.1 L767.0,357.1 L768.8,357.2 L770.7,357.2 L772.5,357.3 L774.4,357.4 L776.3,357.6 L778.1,357.8 L780.0,358.2 L781.8,359.0 L783.7,375.5 L785.6,403.0 L787.4,429.9 L789.3,456.0 L791.1,480.7 L793.0,503.6 L794.9,524.3 L796.7,542.4 L798.6,557.7 L800.4,569.9 L802.3,578.7 L804.2,584.1 L806.0,585.9 L807.9,584.1 L809.7,578.7 L811.6,569.9 L813.4,557.7 L815.3,542.4 L817.2,524.3 L819.0,503.6 L820.9,480.7 L822.7,456.0 L824.6,429.9 L826.5,403.0 L828.3,375.5 L830.2,359.0 L832.0,358.2 L833.9,357.8 L835.8,357.6 L837.6,357.4 L839.5,357.3 L841.3,357.2 L843.2,357.2 L845.1,357.1 L846.9,357.1 L848.8,357.1 L850.6,357.1 L852.5,357.1 L854.3,357.1 L856.2,357.1 L858.1,357.2 L859.9,357.2 L861.8,357.3 L863.6,357.4 L865.5,357.6 L867.4,357.8 L869.2,358.2 L871.1,359.0 L872.9,375.5 L874.8,403.0 L876.7,429.9 L878.5,456.0 L880.4,480.7 L882.2,503.6 L884.1,524.3 L886.0,542.4 L887.8,557.7 L889.7,569.9 L891.5,578.7 L893.4,584.1 L895.2,585.9 L897.1,584.1 L899.0,578.7 L900.8,569.9 L902.7,557.7 L904.5,542.4 L906.4,524.3 L908.3,503.6 L910.1,480.7 L912.0,456.0 L913.8,429.9 L915.7,403.0 L917.6,375.5 L919.4,359.0 L921.3,358.2 L923.1,357.8 L925.0,357.6 L926.9,357.4 L928.7,357.3 L930.6,357.2 L932.4,357.2 L934.3,357.1 L936.2,357.1 L938.0,357.1 L939.9,357.1 L941.7,357.1 L943.6,357.1 L945.4,357.1 L947.3,357.2 L949.2,357.2 L951.0,357.3 L952.9,357.4 L954.7,357.6 L956.6,357.8 L958.5,358.2 L960.3,359.0 L962.2,375.5 L964.0,403.0 L965.9,429.9 L967.8,456.0 L969.6,480.7 L971.5,503.6 L973.3,524.3 L975.2,542.4 L977.1,557.7 L978.9,569.9 L980.8,578.7 L982.6,584.1 L984.5,585.9 L986.3,584.1 L988.2,578.7 L990.1,569.9 L991.9,557.7 L993.8,542.4 L995.6,524.3 L997.5,503.6 L999.4,480.7 L1001.2,456.0 L1003.1,429.9 L1004.9,403.0 L1006.8,375.5" stroke="#2424e6" stroke-width="1.4" fill="none" stroke-linejoin="round"/>
<text x="557" y="587.5" text-anchor="end" font-size="9" fill="#6a6a6a">-8</text>
<text x="557" y="535.3" text-anchor="end" font-size="9" fill="#6a6a6a">-6</text>
<text x="557" y="483.1" text-anchor="end" font-size="9" fill="#6a6a6a">-4</text>
<text x="557" y="430.9" text-anchor="end" font-size="9" fill="#6a6a6a">-2</text>
<text x="557" y="378.7" text-anchor="end" font-size="9" fill="#6a6a6a">0</text>
<text x="557" y="326.5" text-anchor="end" font-size="9" fill="#6a6a6a">2</text>
<text x="557" y="274.3" text-anchor="end" font-size="9" fill="#6a6a6a">4</text>
<text x="557" y="222.1" text-anchor="end" font-size="9" fill="#6a6a6a">6</text>
<text x="557" y="169.9" text-anchor="end" font-size="9" fill="#6a6a6a">8</text>
<text x="605.2" y="622.5" text-anchor="middle" font-size="9" fill="#6a6a6a">500µ</text>
<text x="649.8" y="622.5" text-anchor="middle" font-size="9" fill="#6a6a6a">1m</text>
<text x="694.5" y="622.5" text-anchor="middle" font-size="9" fill="#6a6a6a">1.5m</text>
<text x="739.1" y="622.5" text-anchor="middle" font-size="9" fill="#6a6a6a">2m</text>
<text x="783.7" y="622.5" text-anchor="middle" font-size="9" fill="#6a6a6a">2.5m</text>
<text x="828.3" y="622.5" text-anchor="middle" font-size="9" fill="#6a6a6a">3m</text>
<text x="872.9" y="622.5" text-anchor="middle" font-size="9" fill="#6a6a6a">3.5m</text>
<text x="917.6" y="622.5" text-anchor="middle" font-size="9" fill="#6a6a6a">4m</text>
<text x="962.2" y="622.5" text-anchor="middle" font-size="9" fill="#6a6a6a">4.5m</text>
<text x="1006.8" y="622.5" text-anchor="middle" font-size="9" fill="#6a6a6a">5m</text>
<text x="783" y="633.5" text-anchor="middle" font-size="9" fill="#6a6a6a">Time (s)</text>
<text transform="translate(524,375) rotate(-90)" text-anchor="middle" font-size="8.5" fill="#6a6a6a">Voltage (V)</text>
<path d="M970,150H982" stroke="#1ea0e6" stroke-width="1.5"/>
<text x="983.5" y="153" font-size="8.3" fill="#666" textLength="32" lengthAdjust="spacingAndGlyphs">PR2: V(5)</text>
<path d="M970,162H982" stroke="#2cb52c" stroke-width="1.5"/>
<text x="983.5" y="165" font-size="8.3" fill="#666" textLength="32" lengthAdjust="spacingAndGlyphs">PR1: V(3)</text>
<path d="M970,174H982" stroke="#2424e6" stroke-width="1.5"/>
<text x="983.5" y="177" font-size="8.3" fill="#666" textLength="32" lengthAdjust="spacingAndGlyphs">PR3: V(6)</text>
</svg></body></html>
